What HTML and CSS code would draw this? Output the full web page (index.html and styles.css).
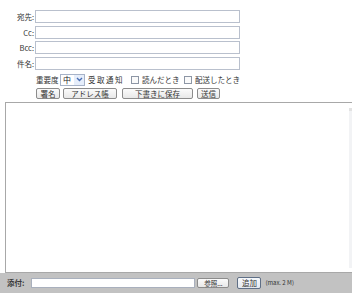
FILE: index.html
```html
<!DOCTYPE html>
<html lang="ja">
<head>
    <meta charset="UTF-8">
    <title>メール作成</title>
    <link rel="stylesheet" href="styles.css">
</head>
<body>

<div class="page">
    <div class="header">
        <div class="fields">
            <label class="field-label">宛先:</label>
            <input class="field-input" type="text">
            <label class="field-label">Cc:</label>
            <input class="field-input" type="text">
            <label class="field-label">Bcc:</label>
            <input class="field-input" type="text">
            <label class="field-label">件名:</label>
            <input class="field-input" type="text">
        </div>

        <div class="options">
            <span class="opt-text">重要度</span>
            <span class="select">
                <span class="select-value">中</span>
                <span class="select-arrow">
                    <svg width="7" height="5" viewBox="0 0 7 5"><path d="M1 1 L3.5 3.5 L6 1" fill="none" stroke="#4a6fb5" stroke-width="1.4"/></svg>
                </span>
            </span>
            <span class="opt-text notify">受取通知</span>
            <span class="check"></span>
            <span class="opt-text check-label">読んだとき</span>
            <span class="check"></span>
            <span class="opt-text check-label">配送したとき</span>
        </div>

        <div class="actions">
            <button class="btn btn-sign">署名</button>
            <button class="btn btn-addr">アドレス帳</button>
            <button class="btn btn-draft">下書きに保存</button>
            <button class="btn btn-send">送信</button>
        </div>
    </div>

    <div class="editor">
        <div class="editor-body"></div>
        <div class="editor-scroll"></div>
    </div>

    <div class="attach">
        <span class="attach-label">添付:</span>
        <input class="attach-input" type="text">
        <button class="btn btn-browse">参照...</button>
        <button class="btn btn-add">追加</button>
        <span class="attach-note">(max. 2 M)</span>
    </div>
</div>

</body>
</html>
```

FILE: styles.css
```css
body, html {
    margin: 0;
    overflow: hidden;
    background: #fff;
}
.page {
    display: flex;
    flex-direction: column;
    width: 352px;
    height: 299px;
    font-family: "Noto Sans CJK JP", "DejaVu Sans", sans-serif;
    font-size: 7.5px;
    color: #333;
}
.header {
    padding-top: 10px;
}
.fields {
    display: grid;
    grid-template-columns: 35px 205px;
    row-gap: 2.5px;
}
.field-label {
    align-self: center;
    text-align: right;
    padding-right: 1px;
    line-height: 13px;
}
.field-input {
    height: 13px;
    margin: 0;
    padding: 0 2px;
    border: 1px solid #b9c0cd;
    box-sizing: border-box;
    background: #fff;
}

/* options row */
.options {
    display: flex;
    align-items: center;
    height: 12px;
    margin: 4px 0 0 36px;
}
.opt-text {
    line-height: 12px;
    white-space: nowrap;
}
.select {
    display: flex;
    align-items: center;
    width: 25px;
    height: 12px;
    margin-left: 1.5px;
    border: 1px solid #a7b3c8;
    box-sizing: border-box;
    background: #fff;
}
.select-value {
    flex: 1;
    padding-left: 2px;
    font-size: 8px;
    color: #222;
}
.select-arrow {
    display: flex;
    align-items: center;
    justify-content: center;
    width: 10px;
    height: 10px;
    background: #e6eefb;
}
.notify {
    margin-left: 3px;
    letter-spacing: 1.5px;
}
.check {
    width: 8px;
    height: 8px;
    margin-left: 7px;
    border: 1px solid #8d96a5;
    box-sizing: border-box;
    background: #fafafa;
}
.check-label {
    margin-left: 3px;
}
.check-label + .check {
    margin-left: 4.5px;
}

/* buttons */
.actions {
    display: flex;
    align-items: center;
    height: 11.5px;
    margin: 2px 0 0 36px;
}
.btn {
    height: 11.5px;
    margin: 0;
    padding: 0;
    border: 1px solid #8c8c8c;
    border-radius: 2px;
    box-sizing: border-box;
    background: linear-gradient(#fbfbfb, #e8e8e8);
    font-family: inherit;
    font-size: 7.5px;
    line-height: 9px;
    color: #333;
    text-align: center;
}
.btn-sign {
    width: 24px;
}
.btn-addr {
    width: 54px;
    margin-left: 3px;
}
.btn-draft {
    width: 71px;
    margin-left: 5px;
}
.btn-send {
    width: 23px;
    margin-left: 4px;
}

/* message body */
.editor {
    display: flex;
    width: 350px;
    height: 171px;
    margin: 2.5px 0 0 5px;
    border: 1px solid #a8a8a8;
    box-sizing: border-box;
    background: #fff;
}
.editor-body {
    flex: 1;
}
.editor-scroll {
    width: 4px;
    margin: 5px 1px 4px 0;
    background: #f2f3f5;
    border-top: 3px solid #e2e2e2;
}

/* attachment bar */
.attach {
    display: flex;
    align-items: center;
    height: 20px;
    padding-left: 7px;
    background: #c2c2c2;
}
.attach-label {
    font-weight: bold;
    color: #3a3a3a;
}
.attach-input {
    width: 164px;
    height: 10px;
    margin: 1px 0 0 7px;
    padding: 0;
    border: 1px solid #a9b0bd;
    box-sizing: border-box;
    background: #fff;
}
.btn-browse {
    width: 32px;
    height: 10px;
    margin: 1px 0 0 2px;
    line-height: 8px;
    font-size: 6.5px;
}
.btn-add {
    width: 24px;
    height: 12px;
    margin-left: 8px;
    border: 1px solid #5f6f86;
    background: linear-gradient(#f6f8fb, #e3e8ef);
}
.attach-note {
    margin-left: 4px;
    font-size: 6px;
    color: #333;
}
```
